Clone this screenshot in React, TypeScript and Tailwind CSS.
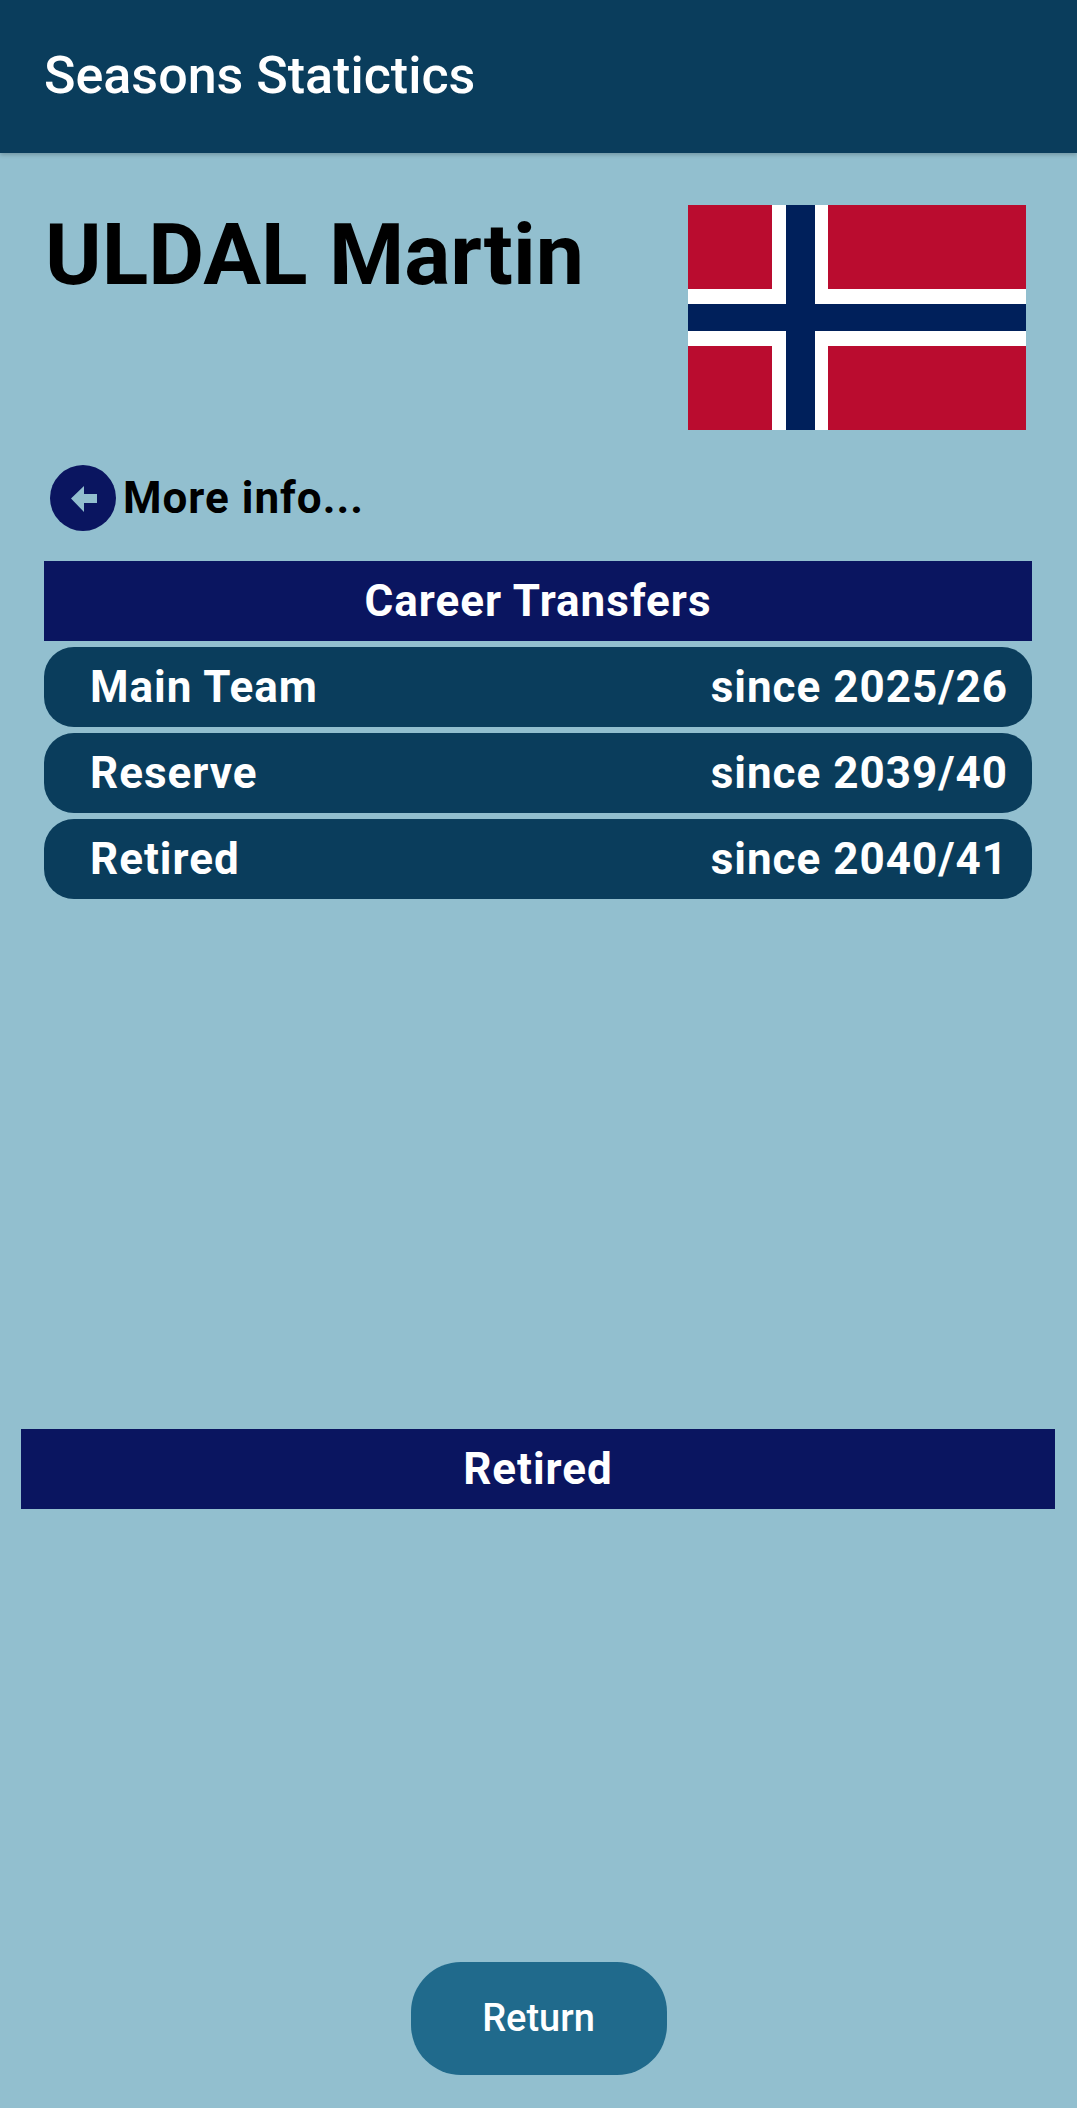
const font = "font-['Roboto',sans-serif]";

const transfers = [
  { team: "Main Team", since: "since 2025/26" },
  { team: "Reserve", since: "since 2039/40" },
  { team: "Retired", since: "since 2040/41" },
];

function NorwayFlag() {
  return (
    <svg width="338" height="225" viewBox="0 0 338 225" className="block shrink-0">
      <rect width="338" height="225" fill="#ba0c2f" />
      <rect x="84" width="56" height="225" fill="#ffffff" />
      <rect y="84" width="338" height="57" fill="#ffffff" />
      <rect x="98" width="29" height="225" fill="#00205b" />
      <rect y="99" width="338" height="27" fill="#00205b" />
    </svg>
  );
}

export default function App() {
  return (
    <div className={`${font} flex h-[2108px] w-[1077px] flex-col overflow-hidden bg-[#92bfcf]`}>
      {/* Top bar */}
      <header className="flex h-[153px] shrink-0 items-center bg-[#0a3d5c] px-[44px] pb-[1px] shadow-[0_2px_4px_rgba(0,0,0,0.2)]">
        <h1 className="text-[52px] font-medium leading-none text-white">Seasons Statictics</h1>
      </header>

      <main className="flex grow flex-col">
        {/* Player name and flag */}
        <div className="flex items-start justify-between pl-[45px] pr-[51px] pt-[52px]">
          <h2 className="text-[86px] font-bold leading-[100px] text-black">ULDAL Martin</h2>
          <NorwayFlag />
        </div>

        {/* More info link */}
        <div className="ml-[50px] mt-[35px] flex h-[66px] items-center gap-[7px]">
          <span className="flex h-[66px] w-[66px] items-center justify-center rounded-full bg-[#0a1560]">
            <svg width="66" height="66" viewBox="0 0 66 66">
              <path d="M21 33.5 L34 21 V29 H47 V38 H34 V47 Z" fill="#92bfcf" />
            </svg>
          </span>
          <span className="text-[44px] font-bold leading-none tracking-[1px] text-black">More info...</span>
        </div>

        {/* Career transfers */}
        <section className="mx-[45px] ml-[44px] mt-[30px] flex flex-col gap-[6px]">
          <div className="flex h-[80px] items-center justify-center bg-[#0a1560] text-[44px] font-bold tracking-[1px] text-white">
            Career Transfers
          </div>
          {transfers.map((t) => (
            <div
              key={t.team}
              className="flex h-[80px] items-center justify-between rounded-[30px] bg-[#0a3d5c] pl-[46px] pr-[24px] text-[44px] font-bold tracking-[1px] text-white"
            >
              <span>{t.team}</span>
              <span>{t.since}</span>
            </div>
          ))}
        </section>

        {/* Current status */}
        <div className="mx-[22px] ml-[21px] mt-[530px] flex h-[80px] items-center justify-center bg-[#0a1560] text-[44px] font-bold tracking-[1px] text-white">
          Retired
        </div>

        <button className="mx-auto mt-[453px] flex h-[113px] w-[256px] items-center justify-center rounded-[50px] bg-[#206a8c] text-[38px] font-medium text-white">
          Return
        </button>
      </main>
    </div>
  );
}
